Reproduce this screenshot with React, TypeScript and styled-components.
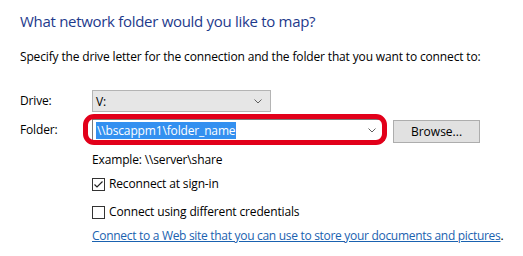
import React from 'react';
import styled, { createGlobalStyle } from 'styled-components';

const Global = createGlobalStyle`
  html, body { margin: 0; padding: 0; background: #fff; }
  body {
    font-family: "Open Sans", "Noto Sans", sans-serif;
    font-size: 12px;
    letter-spacing: -0.15px;
    color: #000;
  }
`;

const Page = styled.div`
  width: 523px;
  height: 256px;
  box-sizing: border-box;
  padding: 11px 0 0 20px;
  overflow: hidden;
`;

const Title = styled.h1`
  margin: 0;
  font-weight: 400;
  font-size: 15px;
  letter-spacing: -0.3px;
  line-height: 20px;
  color: #1e3a8c;
`;

const Intro = styled.p`
  margin: 18px 0 0;
  line-height: 16px;
  white-space: nowrap;
`;

const Row = styled.div<{ $top: number }>`
  display: flex;
  align-items: flex-start;
  margin-top: ${(p) => p.$top}px;
`;

const Label = styled.div`
  width: 72px;
  flex: none;
  line-height: 22px;
`;

const Combo = styled.div<{ $width: number; $grey?: boolean }>`
  position: relative;
  box-sizing: border-box;
  width: ${(p) => p.$width}px;
  height: 22px;
  border: 1px solid ${(p) => (p.$grey ? '#b4b4b4' : '#7a7a7a')};
  background: ${(p) => (p.$grey ? '#e6e6e6' : '#fff')};
  display: flex;
  align-items: center;
  padding-left: 3px;
`;

const Chevron = styled.svg`
  position: absolute;
  right: 8px;
  top: 8px;
`;

const Selected = styled.span`
  background: #3390f0;
  color: #fff;
  line-height: 17px;
  padding: 0 1px;
`;

const Highlight = styled.div`
  position: absolute;
  left: -10px;
  right: -3px;
  top: -6px;
  bottom: -5px;
  border: 5px solid #e2001a;
  border-radius: 11px;
  pointer-events: none;
`;

const Button = styled.button`
  box-sizing: border-box;
  margin: 1px 0 0 8px;
  width: 87px;
  height: 23px;
  border: 1px solid #adadad;
  background: #e1e1e1;
  font: inherit;
  color: #000;
  padding: 0;
`;

const Indent = styled.div`
  margin-left: 72px;
`;

const Line = styled.div<{ $top: number }>`
  margin-top: ${(p) => p.$top}px;
  line-height: 16px;
  white-space: nowrap;
`;

const CheckRow = styled.div<{ $top: number }>`
  display: flex;
  align-items: center;
  gap: 4px;
  margin-top: ${(p) => p.$top}px;
  line-height: 16px;
`;

const Box = styled.span`
  box-sizing: border-box;
  width: 13px;
  height: 13px;
  border: 1px solid #333;
  background: #fff;
  display: flex;
  align-items: center;
  justify-content: center;
`;

const Link = styled.a`
  color: #1a62b0;
  text-decoration: underline;
  letter-spacing: -0.3px;
`;

const ChevronIcon = () => (
  <Chevron width="8" height="5" viewBox="0 0 8 5">
    <path d="M0.5 0.5 L4 4 L7.5 0.5" fill="none" stroke="#606060" strokeWidth="1" />
  </Chevron>
);

const Check = ({ checked }: { checked?: boolean }) => (
  <Box>
    {checked && (
      <svg width="11" height="11" viewBox="0 0 11 11">
        <path d="M1.5 5.5 L4 8 L9.5 2.5" fill="none" stroke="#222" strokeWidth="1.2" />
      </svg>
    )}
  </Box>
);

export default function App() {
  return (
    <>
      <Global />
      <Page>
        <Title>What network folder would you like to map?</Title>
        <Intro>Specify the drive letter for the connection and the folder that you want to connect to:</Intro>
        <Row $top={25}>
          <Label>Drive:</Label>
          <Combo $width={179} $grey>
            V:
            <ChevronIcon />
          </Combo>
        </Row>
        <Row $top={7}>
          <Label>Folder:</Label>
          <Combo $width={293}>
            <Selected>\\bscappm1\folder_name</Selected>
            <ChevronIcon />
            <Highlight />
          </Combo>
          <Button>Browse...</Button>
        </Row>
        <Indent>
          <Line $top={9}>Example: \\server\share</Line>
          <CheckRow $top={8}>
            <Check checked />
            <span>Reconnect at sign-in</span>
          </CheckRow>
          <CheckRow $top={12}>
            <Check />
            <span>Connect using different credentials</span>
          </CheckRow>
          <Line $top={8}>
            <Link href="#">Connect to a Web site that you can use to store your documents and pictures</Link>.
          </Line>
        </Indent>
      </Page>
    </>
  );
}
